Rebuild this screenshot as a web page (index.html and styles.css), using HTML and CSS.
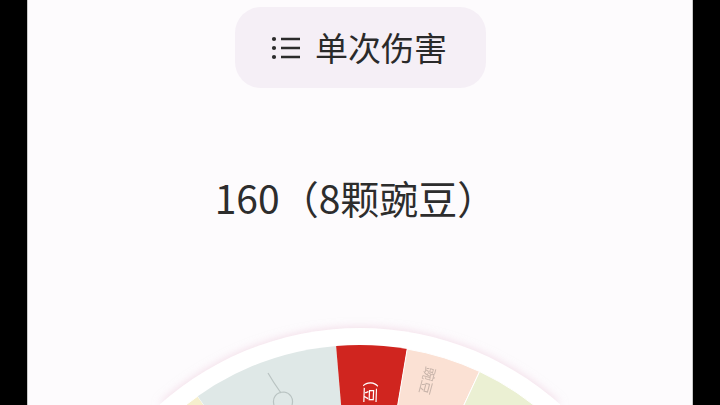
FILE: index.html
```html
<!DOCTYPE html>
<html lang="zh-CN">
<head>
    <meta charset="UTF-8">
    <meta name="viewport" content="width=device-width, initial-scale=1.0">
    <title>单次伤害</title>
    <link rel="stylesheet" href="styles.css">
</head>
<body>
    <div class="screen">
        <div class="chip">
            <svg class="chip-icon" width="30" height="24" viewBox="0 0 30 24">
                <circle cx="3" cy="3" r="2.1" fill="#2b2b2b"/>
                <circle cx="3" cy="12" r="2.1" fill="#2b2b2b"/>
                <circle cx="3" cy="21" r="2.1" fill="#2b2b2b"/>
                <path d="M10 3H29M10 12H29M10 21H29" stroke="#2b2b2b" stroke-width="2.4"/>
            </svg>
            <span class="chip-text">单次伤害</span>
        </div>

        <div class="result">160（8颗豌豆）</div>

        <div class="wheel-wrap">
            <svg class="wheel" width="640" height="85" viewBox="0 0 640 85">
                <circle cx="320" cy="308" r="300" fill="#ffffff"/>
                <path d="M320 308L74.9 166.5A283 283 0 0 1 157.7 76.2Z" fill="#f6efcd" stroke="#fff" stroke-width="1"/>
                <path d="M320 308L157.7 76.2A283 283 0 0 1 296.1 26Z" fill="#dfe8e7"/>
                <path d="M320 308L296.1 26A283 283 0 0 1 367.2 29Z" fill="#d0251f"/>
                <path d="M320 308L367.2 29A283 283 0 0 1 439.6 51.5Z" fill="#fbe1d4" stroke="#fff" stroke-width="1"/>
                <path d="M320 308L439.6 51.5A283 283 0 0 1 564.1 166.5Z" fill="#ebf0d3" stroke="#fff" stroke-width="1"/>
                <path d="M228 53C232 60 236 66 241 73M244 72C236 72 232 78 234 85M244 72C250 73 254 78 252 85" fill="none" stroke="#b9c3c2" stroke-width="1.2"/>
                <text class="seg-text seg-red" transform="translate(325 51) rotate(92)">（豆</text>
                <text class="seg-text seg-peach" transform="translate(386 46) rotate(105)">豌豆</text>
            </svg>
        </div>
    </div>
</body>
</html>
```

FILE: styles.css
```css
*{margin:0; padding:0; box-sizing:border-box}
body{background:#000; width:720px; height:405px; overflow:hidden; font-family:"Noto Sans CJK SC", "Noto Sans", sans-serif}
.screen{width:666px; height:405px; margin:0 auto; background:#fdfbfd; border-left:1px solid #c9c9c9; border-right:1px solid #c9c9c9; display:flex; flex-direction:column; align-items:center; overflow:hidden}
.chip{margin-top:7px; width:251px; height:81px; border-radius:26px; background:#f5eff6; display:flex; align-items:center; justify-content:center; gap:14px; padding-right:2px; flex-shrink:0}
.chip-icon{display:block; flex-shrink:0}
.chip-text{font-size:33px; color:#2a2a2a; line-height:1}
.result{margin-top:84px; font-size:39px; line-height:50px; color:#2d2d2d; padding-right:9px; flex-shrink:0}
.wheel-wrap{margin-top:98px; height:85px; display:flex; justify-content:center; flex-shrink:0}
.wheel{display:block; filter:drop-shadow(0 0 5px rgba(232,185,208,0.55))}
.seg-text{font-size:16px; font-family:"Noto Sans CJK SC", sans-serif}
.seg-red{fill:#ffffff}
.seg-peach{fill:#c8b4aa; font-size:14px}
```
